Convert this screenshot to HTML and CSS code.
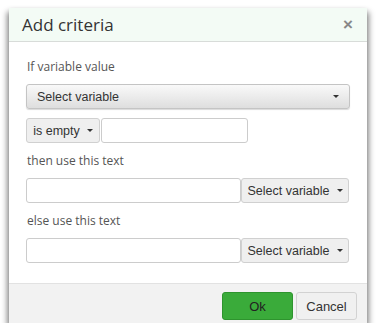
FILE: index.html
```html
<!DOCTYPE html>
<html lang="en">
<head>
<meta charset="UTF-8">
<title>Add criteria</title>
<link rel="stylesheet" href="styles.css">
</head>
<body>

<div id="dialog">

<div id="header">
<span class="title">Add criteria</span>
<span class="close">&times;</span>
</div><!-- header -->

<div id="body">
<div class="label">If variable value</div>
<button type="button" class="selectbig">Select variable<span class="caret"></span></button>

<div class="row">
<button type="button" class="flatbutton isempty">is empty<span class="caret"></span></button>
<input type="text" class="shortinput">
</div>

<div class="label">then use this text</div>
<div class="row">
<input type="text" class="textinput">
<button type="button" class="flatbutton varbutton">Select variable<span class="caret"></span></button>
</div>

<div class="label">else use this text</div>
<div class="row">
<input type="text" class="textinput">
<button type="button" class="flatbutton varbutton">Select variable<span class="caret"></span></button>
</div>
</div><!-- body -->

<div id="footer">
<button type="button" class="okbutton">Ok</button>
<button type="button" class="cancelbutton">Cancel</button>
</div><!-- footer -->

</div><!-- dialog -->

</body>
</html>
```

FILE: styles.css
```css
body {
padding: 0;
margin: 0;
background: #fff;
font-family: "Open Sans", sans-serif;
}
#dialog {
width: 358px;
margin: 8px 0 0 9px;
background-color: #fff;
box-shadow: 0 8px 0 0 #7b7b7b, -2px 4px 6px rgba(0, 0, 0, 0.4), 2px 4px 6px rgba(0, 0, 0, 0.4);
}
#header {
display: flex;
align-items: center;
justify-content: space-between;
height: 33px;
padding: 0 14px 0 13px;
background-color: #f3fbf5;
border-bottom: 1px solid #d8dcd9;
}
.title {
font-size: 17px;
color: #333;
}
.close {
font-family: "Liberation Sans", Arial, sans-serif;
font-size: 17px;
font-weight: bold;
color: #888;
}
#body {
padding: 16px 17px 20px 17px;
}
.label {
font-size: 12px;
line-height: 18px;
color: #555;
margin: 0 0 8px 1px;
}
.row {
display: flex;
margin: 0 0 9px 0;
}
button {
font-family: "Liberation Sans", Arial, sans-serif;
font-size: 12.5px;
color: #333;
white-space: nowrap;
cursor: pointer;
}
.caret {
display: inline-block;
width: 0;
height: 0;
margin-left: 7px;
border-top: 3px solid #333;
border-left: 3px solid transparent;
border-right: 3px solid transparent;
}
.selectbig {
display: flex;
align-items: center;
justify-content: space-between;
width: 324px;
height: 25px;
margin: 0 0 9px 0;
padding: 0 10px 0 10px;
border: 1px solid #c4c4c4;
border-radius: 3px;
background: linear-gradient(#f9f9f9, #dedede);
box-shadow: 0 1px 1px rgba(0, 0, 0, 0.15);
}
.flatbutton {
display: flex;
align-items: center;
justify-content: center;
height: 25px;
padding: 0;
background-color: #efefef;
border: 1px solid #d0d0d0;
border-radius: 3px;
}
.isempty {
width: 74px;
}
.varbutton {
width: 108px;
}
input {
height: 25px;
box-sizing: border-box;
border: 1px solid #ccc;
border-radius: 3px;
}
.shortinput {
width: 147px;
margin-left: 1px;
}
.textinput {
width: 215px;
}
#body .row:last-child {
margin-bottom: 0;
}
#footer {
display: flex;
justify-content: flex-end;
gap: 3px;
padding: 8px 10px 3px 10px;
background-color: #f2f2f2;
border-top: 1px solid #e2e2e2;
}
.okbutton {
width: 71px;
height: 28px;
font-size: 13px;
color: #222;
background-color: #3aab3a;
border: 1px solid #2e942e;
border-radius: 3px;
}
.cancelbutton {
width: 61px;
height: 28px;
font-size: 13px;
background-color: #f0f0f0;
border: 1px solid #d2d2d2;
border-radius: 3px;
}
```
